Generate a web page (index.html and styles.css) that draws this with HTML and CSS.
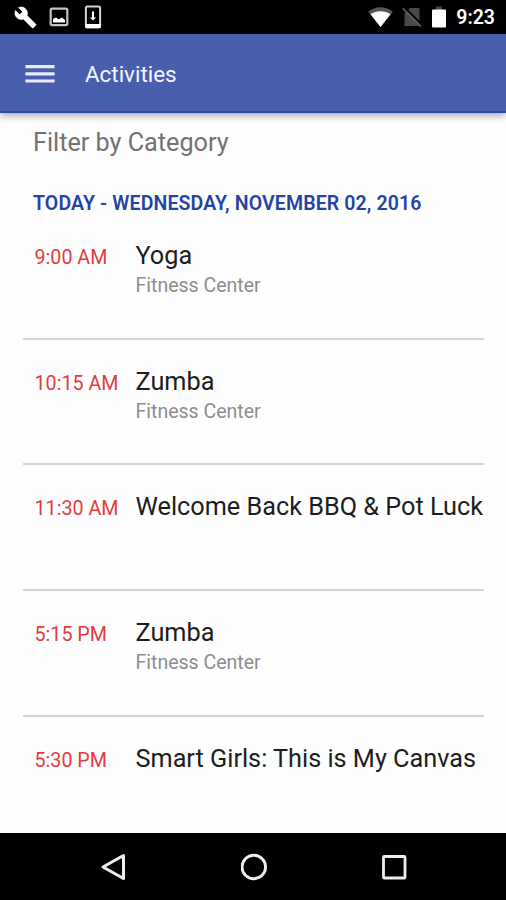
FILE: index.html
```html
<!DOCTYPE html>
<html lang="en">
<head>
<meta charset="utf-8">
<title>Activities</title>
<link rel="stylesheet" href="styles.css">
</head>
<body>
<div class="status">
  <div class="status-left">
    <svg width="23" height="23" viewBox="0 0 24 24"><path fill="#fff" stroke="#fff" stroke-width=".7" d="M22.7 19l-9.100-9.100c.9-2.300.4-5-1.500-6.900-2-2-5-2.400-7.400-1.300L9 6 6 9 1.600 4.700C.4 7.100.9 10.100 2.900 12.100c1.900 1.900 4.600 2.400 6.900 1.500l9.100 9.100c.4.4 1 .4 1.400 0l2.300-2.300c.5-.4.5-1.100.1-1.400z"/></svg>
    <svg width="20" height="20" viewBox="0 0 20 20"><rect x="1.700" y="1.700" width="16.600" height="16.400" rx="1.500" fill="none" stroke="#c4c4c4" stroke-width="2.200"/><path fill="#fff" d="M4 15.500V12l3-1.500 2.500 2 3.500-2 3 2.500v2.500z"/></svg>
    <svg width="18" height="24" viewBox="0 0 18 24"><rect x="1.900" y="1.500" width="14.200" height="21" rx="1.500" fill="none" stroke="#d6d6d6" stroke-width="2"/><path fill="#fff" d="M1.500 19h15v4h-15zM8 6.500h2v6h2.200L9 15.500 5.800 12.500H8z"/></svg>
  </div>
  <div class="status-right">
    <svg width="25" height="21" viewBox="0 0 25 21"><path fill="#555" d="M.2 4.800C7-1.200 18-1.200 24.800 4.800L12.500 20z"/><path fill="#fff" d="M2.500 7.200c5.500-4 14.500-4 20 0L12.500 20z"/></svg>
    <svg width="20" height="21" viewBox="0 0 20 21"><path fill="#4a4a4a" d="M8 1h9.500v18H2.500V6.500z"/><path stroke="#000" stroke-width="2" d="M2.200 0l18 18"/><path stroke="#626262" stroke-width="1.600" d="M.7 1.300l18.200 18.200"/></svg>
    <svg width="16" height="22" viewBox="0 0 16 22"><path fill="#444" d="M5 .5h6V4H5z"/><rect x="1" y="3.500" width="14" height="18" rx="1" fill="#fff"/></svg>
    <span class="clock">9:23</span>
  </div>
</div>
<header class="appbar">
  <svg width="30" height="20" viewBox="0 0 30 20"><path fill="#e9ecfa" d="M.4 1h29.200v3.200H.4zM.4 8.200h29.200v3.200H.4zM.4 15.400h29.200v3.200H.4z"/></svg>
  <h1 class="heading">Activities</h1>
</header>
<main class="content">
  <div class="filter"><span>Filter by Category</span></div>
  <h2 class="date">TODAY - WEDNESDAY, NOVEMBER 02, 2016</h2>
  <ul class="list">
    <li class="row"><span class="time">9:00 AM</span><div><div class="title">Yoga</div><div class="place">Fitness Center</div></div></li>
    <li class="row"><span class="time">10:15 AM</span><div><div class="title">Zumba</div><div class="place">Fitness Center</div></div></li>
    <li class="row"><span class="time">11:30 AM</span><div><div class="title">Welcome Back BBQ &amp; Pot Luck</div></div></li>
    <li class="row"><span class="time">5:15 PM</span><div><div class="title">Zumba</div><div class="place">Fitness Center</div></div></li>
    <li class="row"><span class="time">5:30 PM</span><div><div class="title">Smart Girls: This is My Canvas</div></div></li>
  </ul>
</main>
<nav class="navbar">
  <svg width="28" height="30" viewBox="0 0 28 30"><path fill="none" stroke="#eee" stroke-width="3" stroke-linejoin="round" d="M23.500 3.500v23L3 15z"/></svg>
  <svg width="28" height="28" viewBox="0 0 28 28"><circle cx="12.800" cy="14" r="11.800" fill="none" stroke="#eee" stroke-width="2.900"/></svg>
  <svg width="26" height="26" viewBox="0 0 26 26"><rect x="2.500" y="2.500" width="21.500" height="21.500" rx=".8" fill="none" stroke="#eee" stroke-width="2.800"/></svg>
</nav>
</body>
</html>
```
FILE: styles.css
```css
* { box-sizing: border-box; }
body {
  margin: 0;
  height: 900px;
  display: flex;
  flex-direction: column;
  overflow: hidden;
  background: #fefefe;
  font-family: Roboto, "Liberation Sans", sans-serif;
}
svg { display: block; flex: none; }
.status {
  flex: none;
  height: 34px;
  background: #000;
  display: flex;
  justify-content: space-between;
  padding: 0 11px 0 14px;
}
.status-left, .status-right { display: flex; align-items: center; }
.status-left { gap: 12px; }
.status-left svg:last-child { margin-left: 3px; }
.status-right { gap: 9px; }
.clock { color: #fff; font-size: 19.500px; font-weight: 600; line-height: 34px; padding-top: 2px; }
.appbar {
  flex: none;
  height: 79px;
  display: flex;
  align-items: center;
  gap: 30px;
  padding: 3px 25px 0;
  background: #485fae;
  border-bottom: 2px solid #2c4ba3;
  box-shadow: 0 2px 8px rgba(0, 0, 0, .4);
  position: relative;
}
.heading { margin: 0; color: #f4f6ff; font-size: 22.400px; font-weight: 400; }
.content { flex: 1; min-height: 0; overflow: hidden; }
.filter { padding: 15px 33px 0; height: 74px; font-size: 25.200px; line-height: 30px; color: #727272; }
.date { margin: 0; padding: 5px 33px 0; height: 27px; font-size: 19.500px; line-height: 24px; font-weight: 600; letter-spacing: .12px; color: #2443a5; white-space: nowrap; }
.list { list-style: none; margin: 0; padding: 0 22px 0 23px; }
.row {
  height: 125.670px;
  display: grid;
  grid-template-columns: 101px 1fr;
  padding: 27px 0 0 11.500px;
  border-bottom: 2px solid #d4d4d4;
  white-space: nowrap;
}
.row:last-child { border-bottom: 0; }
.time { font-size: 19.700px; line-height: 24px; padding-top: 5px; color: #e43b40; }
.title { font-size: 25.250px; line-height: 30px; color: #1d1d1d; }
.place { font-size: 19.500px; line-height: 24px; padding-top: 3px; color: #8d8d8d; }
.navbar {
  flex: none;
  height: 67px;
  background: #000;
  display: flex;
  align-items: center;
  justify-content: space-between;
  padding: 0 99px 0 100px;
}
```
